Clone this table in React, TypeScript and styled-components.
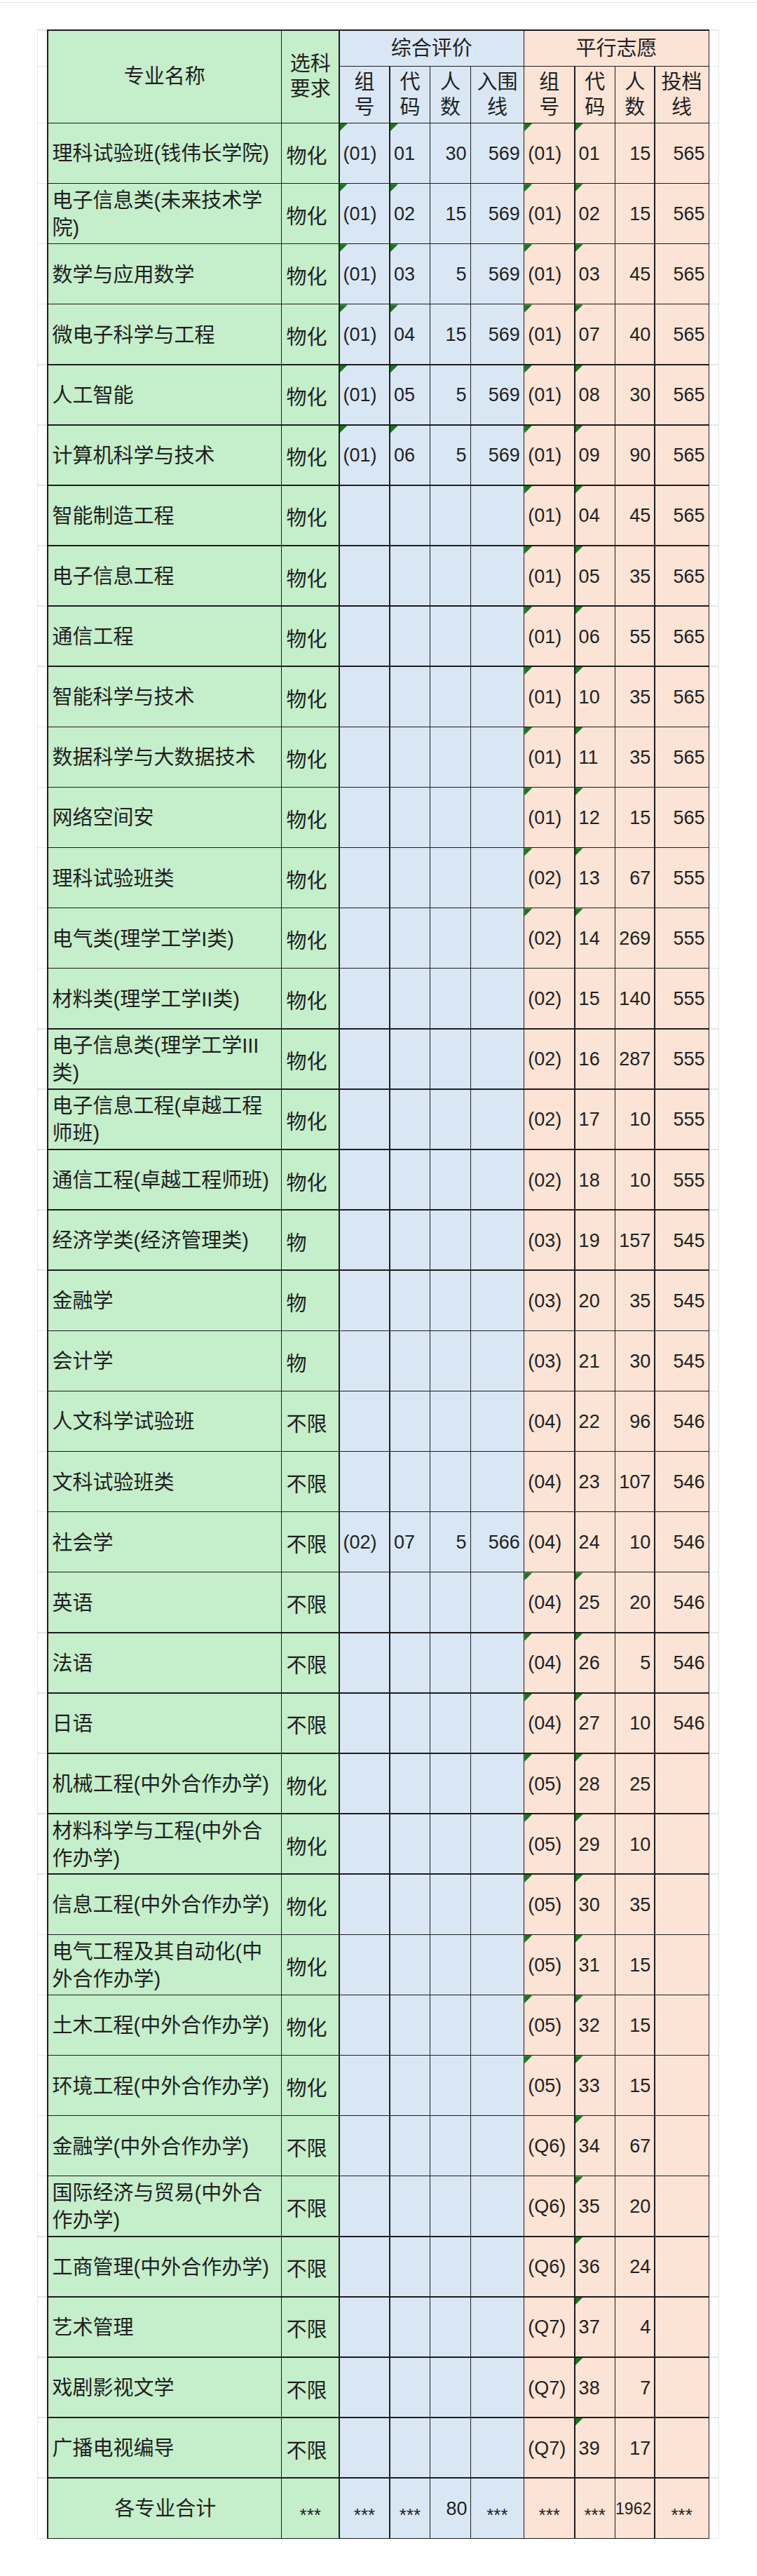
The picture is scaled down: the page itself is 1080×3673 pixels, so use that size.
import React from 'react';
import styled, { createGlobalStyle, css } from 'styled-components';

const GREEN = '#c5eecb';
const BLUE = '#d9e7f5';
const PEACH = '#fbe3d5';

const GlobalStyle = createGlobalStyle`
  html, body {
    margin: 0;
    padding: 0;
    background: #fff;
  }
  body {
    font-family: "Liberation Sans", "Noto Sans CJK SC", sans-serif;
    color: #1f1f1f;
  }
`;

const Page = styled.div`
  width: 1080px;
  min-height: 3673px;
  box-sizing: border-box;
  margin-top: 3px;
  border-top: 1px solid #e3e3e3;
  padding-top: 38px;
`;

const Sheet = styled.div`
  display: flex;
  width: 971px;
  margin-left: 53px;
  border-left: 1px solid #e6e6e6;
  border-right: 1px solid #e6e6e6;
`;

const ROWS = '51fr 81fr repeat(40, 86.15fr)';

const Gutter = styled.div`
  display: grid;
  width: 13px;
  height: 3578px;
  box-sizing: border-box;
  grid-template-rows: ${ROWS};
  row-gap: 1.5px;
  padding: 1.5px 0;
  background: #e6e6e6;
`;

const GutterCell = styled.div`
  background: #fff;
`;

const Table = styled.div`
  display: grid;
  width: 945px;
  height: 3578px;
  box-sizing: border-box;
  grid-template-columns: 338fr 82fr 72fr 57fr 57fr 76fr 72fr 57fr 56fr 77fr;
  grid-template-rows: ${ROWS};
  gap: 1.5px;
  padding: 1.5px;
  background: #1d1d1d;
`;

const HeadCell = styled.div<{ $bg: string; $rows?: number; $cols?: number }>`
  background: ${p => p.$bg};
  display: flex;
  align-items: center;
  justify-content: center;
  text-align: center;
  font-size: 29px;
  line-height: 36px;
  ${p => p.$rows && css`grid-row: span ${p.$rows};`}
  ${p => p.$cols && css`grid-column: span ${p.$cols};`}
`;

const Cell = styled.div<{ $bg: string; $align?: 'left' | 'right' | 'center'; $mark?: boolean }>`
  position: relative;
  background: ${p => p.$bg};
  display: flex;
  align-items: center;
  justify-content: ${p => (p.$align === 'right' ? 'flex-end' : p.$align === 'center' ? 'center' : 'flex-start')};
  padding: 2px 5px 0 5px;
  min-width: 0;
  font-size: 27px;
  white-space: nowrap;
  ${p =>
    p.$mark &&
    css`
      &::before {
        content: '';
        position: absolute;
        top: 0;
        left: 0;
        width: 11px;
        height: 11px;
        background: #14781a;
        clip-path: polygon(0 0, 100% 0, 0 100%);
      }
    `}
`;

const NameCell = styled.div<{ $center?: boolean }>`
  background: ${GREEN};
  display: flex;
  align-items: center;
  justify-content: ${p => (p.$center ? 'center' : 'flex-start')};
  padding: 3px 4px 0 6px;
  font-size: 29px;
  line-height: 39px;
`;

const ReqCell = styled.div`
  background: ${GREEN};
  display: flex;
  align-items: center;
  padding: 3px 4px 0 6px;
  font-size: 29px;
`;

const Stars = styled(Cell)`
  justify-content: center;
  padding-top: 20px;
  font-size: 26px;
`;

const Total = styled(Cell)`
  font-size: ${p => (p.children && String(p.children).length > 2 ? '23px' : '27px')};
  padding-right: 4px;
`;

type Quad = [string, string, string, string];

interface Major {
  name: string;
  req: string;
  z?: Quad;
  zm?: boolean;
  p: Quad;
  pm: 0 | 1 | 2;
}

const majors: Major[] = [
  { name: '理科试验班(钱伟长学院)', req: '物化', z: ['(01)', '01', '30', '569'], zm: true, p: ['(01)', '01', '15', '565'], pm: 2 },
  { name: '电子信息类(未来技术学院)', req: '物化', z: ['(01)', '02', '15', '569'], zm: true, p: ['(01)', '02', '15', '565'], pm: 2 },
  { name: '数学与应用数学', req: '物化', z: ['(01)', '03', '5', '569'], zm: true, p: ['(01)', '03', '45', '565'], pm: 2 },
  { name: '微电子科学与工程', req: '物化', z: ['(01)', '04', '15', '569'], zm: true, p: ['(01)', '07', '40', '565'], pm: 2 },
  { name: '人工智能', req: '物化', z: ['(01)', '05', '5', '569'], zm: true, p: ['(01)', '08', '30', '565'], pm: 2 },
  { name: '计算机科学与技术', req: '物化', z: ['(01)', '06', '5', '569'], zm: true, p: ['(01)', '09', '90', '565'], pm: 2 },
  { name: '智能制造工程', req: '物化', p: ['(01)', '04', '45', '565'], pm: 2 },
  { name: '电子信息工程', req: '物化', p: ['(01)', '05', '35', '565'], pm: 2 },
  { name: '通信工程', req: '物化', p: ['(01)', '06', '55', '565'], pm: 2 },
  { name: '智能科学与技术', req: '物化', p: ['(01)', '10', '35', '565'], pm: 2 },
  { name: '数据科学与大数据技术', req: '物化', p: ['(01)', '11', '35', '565'], pm: 2 },
  { name: '网络空间安', req: '物化', p: ['(01)', '12', '15', '565'], pm: 2 },
  { name: '理科试验班类', req: '物化', p: ['(02)', '13', '67', '555'], pm: 2 },
  { name: '电气类(理学工学I类)', req: '物化', p: ['(02)', '14', '269', '555'], pm: 2 },
  { name: '材料类(理学工学II类)', req: '物化', p: ['(02)', '15', '140', '555'], pm: 0 },
  { name: '电子信息类(理学工学III类)', req: '物化', p: ['(02)', '16', '287', '555'], pm: 0 },
  { name: '电子信息工程(卓越工程师班)', req: '物化', p: ['(02)', '17', '10', '555'], pm: 0 },
  { name: '通信工程(卓越工程师班)', req: '物化', p: ['(02)', '18', '10', '555'], pm: 0 },
  { name: '经济学类(经济管理类)', req: '物', p: ['(03)', '19', '157', '545'], pm: 0 },
  { name: '金融学', req: '物', p: ['(03)', '20', '35', '545'], pm: 0 },
  { name: '会计学', req: '物', p: ['(03)', '21', '30', '545'], pm: 0 },
  { name: '人文科学试验班', req: '不限', p: ['(04)', '22', '96', '546'], pm: 0 },
  { name: '文科试验班类', req: '不限', p: ['(04)', '23', '107', '546'], pm: 0 },
  { name: '社会学', req: '不限', z: ['(02)', '07', '5', '566'], p: ['(04)', '24', '10', '546'], pm: 0 },
  { name: '英语', req: '不限', p: ['(04)', '25', '20', '546'], pm: 2 },
  { name: '法语', req: '不限', p: ['(04)', '26', '5', '546'], pm: 2 },
  { name: '日语', req: '不限', p: ['(04)', '27', '10', '546'], pm: 2 },
  { name: '机械工程(中外合作办学)', req: '物化', p: ['(05)', '28', '25', ''], pm: 2 },
  { name: '材料科学与工程(中外合作办学)', req: '物化', p: ['(05)', '29', '10', ''], pm: 2 },
  { name: '信息工程(中外合作办学)', req: '物化', p: ['(05)', '30', '35', ''], pm: 2 },
  { name: '电气工程及其自动化(中外合作办学)', req: '物化', p: ['(05)', '31', '15', ''], pm: 2 },
  { name: '土木工程(中外合作办学)', req: '物化', p: ['(05)', '32', '15', ''], pm: 2 },
  { name: '环境工程(中外合作办学)', req: '物化', p: ['(05)', '33', '15', ''], pm: 2 },
  { name: '金融学(中外合作办学)', req: '不限', p: ['(Q6)', '34', '67', ''], pm: 1 },
  { name: '国际经济与贸易(中外合作办学)', req: '不限', p: ['(Q6)', '35', '20', ''], pm: 1 },
  { name: '工商管理(中外合作办学)', req: '不限', p: ['(Q6)', '36', '24', ''], pm: 1 },
  { name: '艺术管理', req: '不限', p: ['(Q7)', '37', '4', ''], pm: 1 },
  { name: '戏剧影视文学', req: '不限', p: ['(Q7)', '38', '7', ''], pm: 1 },
  { name: '广播电视编导', req: '不限', p: ['(Q7)', '39', '17', ''], pm: 1 },
];

const zSub = [['组', '号'], ['代', '码'], ['人', '数'], ['入围', '线']];
const pSub = [['组', '号'], ['代', '码'], ['人', '数'], ['投档', '线']];

function Group({ bg, q, markGroup, markCode }: { bg: string; q?: Quad; markGroup?: boolean; markCode?: boolean }) {
  return (
    <>
      <Cell $bg={bg} $mark={markGroup}>{q?.[0]}</Cell>
      <Cell $bg={bg} $mark={markCode}>{q?.[1]}</Cell>
      <Cell $bg={bg} $align="right">{q?.[2]}</Cell>
      <Cell $bg={bg} $align="right">{q?.[3]}</Cell>
    </>
  );
}

export default function App() {
  const gutterRows = 2 + majors.length + 1;

  return (
    <Page>
      <GlobalStyle />
      <Sheet>
        <Gutter>
          {Array.from({ length: gutterRows }, (_, i) => <GutterCell key={i} />)}
        </Gutter>
        <Table>
          <HeadCell $bg={GREEN} $rows={2}>专业名称</HeadCell>
          <HeadCell $bg={GREEN} $rows={2}>选科<br />要求</HeadCell>
          <HeadCell $bg={BLUE} $cols={4}>综合评价</HeadCell>
          <HeadCell $bg={PEACH} $cols={4}>平行志愿</HeadCell>
          {zSub.map(([a, b]) => (
            <HeadCell key={'z' + a} $bg={BLUE}>{a}<br />{b}</HeadCell>
          ))}
          {pSub.map(([a, b]) => (
            <HeadCell key={'p' + a} $bg={PEACH}>{a}<br />{b}</HeadCell>
          ))}

          {majors.map(m => (
            <React.Fragment key={m.name}>
              <NameCell><span>{m.name}</span></NameCell>
              <ReqCell>{m.req}</ReqCell>
              <Group bg={BLUE} q={m.z} markGroup={m.zm} markCode={m.zm} />
              <Group bg={PEACH} q={m.p} markGroup={m.pm === 2} markCode={m.pm > 0} />
            </React.Fragment>
          ))}

          <NameCell $center>各专业合计</NameCell>
          <Stars $bg={GREEN}>***</Stars>
          <Stars $bg={BLUE}>***</Stars>
          <Stars $bg={BLUE}>***</Stars>
          <Total $bg={BLUE} $align="right">80</Total>
          <Stars $bg={BLUE}>***</Stars>
          <Stars $bg={PEACH}>***</Stars>
          <Stars $bg={PEACH}>***</Stars>
          <Total $bg={PEACH} $align="right">1962</Total>
          <Stars $bg={PEACH}>***</Stars>
        </Table>
        <Gutter>
          {Array.from({ length: gutterRows }, (_, i) => <GutterCell key={i} />)}
        </Gutter>
      </Sheet>
    </Page>
  );
}
